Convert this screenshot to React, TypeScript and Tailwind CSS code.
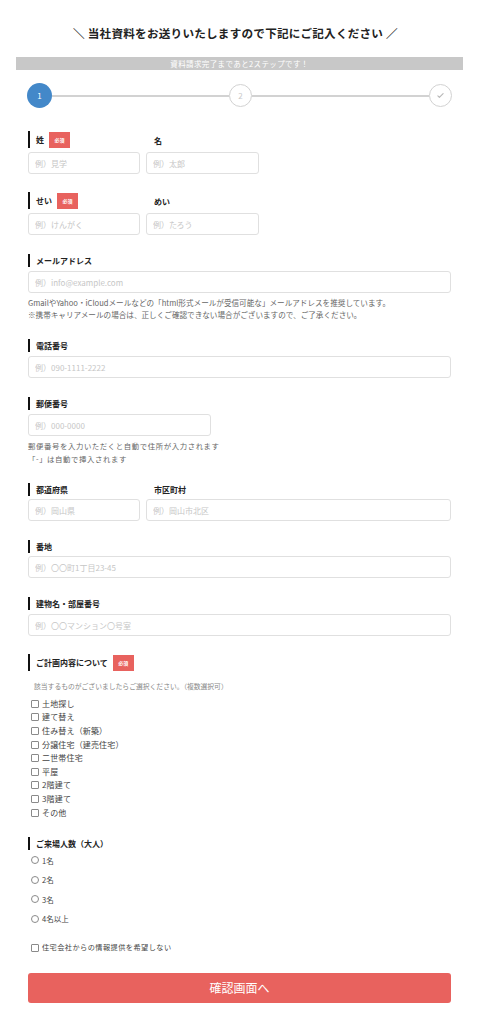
import React from 'react';

const Badge: React.FC = () => (
  <span className="ml-[5px] inline-flex h-[16px] w-[21px] items-center justify-center bg-[#e8625e] text-[5px] font-bold text-white">
    必須
  </span>
);

interface LabelProps {
  text: string;
  required?: boolean;
  bar?: boolean;
}

const Label: React.FC<LabelProps> = ({ text, required = false, bar = true }) => (
  <div
    className={`flex items-center border-l-2 pl-[6px] ${bar ? 'border-[#111]' : 'border-transparent'} ${
      required ? 'h-[17px]' : 'h-[13px]'
    }`}
  >
    <span className="text-[8px] font-bold leading-none text-[#222]">{text}</span>
    {required && <Badge />}
  </div>
);

const Field: React.FC<{ placeholder: string; className?: string }> = ({ placeholder, className = '' }) => (
  <input
    type="text"
    placeholder={placeholder}
    className={`block h-[22px] rounded-[3px] border border-[#e0e0e0] bg-white px-[6px] text-[8px] text-[#333] outline-none placeholder:text-[#c6c6c6] ${className}`}
  />
);

const Box: React.FC = () => (
  <span className="mr-[3px] inline-block h-[8px] w-[8px] rounded-[1px] border border-[#8a8a8a] bg-white" />
);

const Radio: React.FC = () => (
  <span className="mr-[3px] inline-block h-[8px] w-[8px] rounded-full border border-[#8a8a8a] bg-white" />
);

const plans = [
  '土地探し',
  '建て替え',
  '住み替え（新築）',
  '分譲住宅（建売住宅）',
  '二世帯住宅',
  '平屋',
  '2階建て',
  '3階建て',
  'その他',
];

const people = ['1名', '2名', '3名', '4名以上'];

export default function App() {
  return (
    <div className="min-h-[1024px] bg-white font-['Noto_Sans_CJK_JP','Noto_Sans',sans-serif] text-[#333]">
      <div className="ml-[16px] w-[447px] pt-[26px]">
        <h1 className="pr-[8px] text-center text-[11.6px] font-bold leading-[14px] tracking-[0.02em] text-[#222]">
          ＼ 当社資料をお送りいたしますので下記にご記入ください ／
        </h1>

        <div className="mt-[17px] flex h-[13px] items-center justify-center bg-[#c8c8c8] text-[7.5px] leading-none tracking-[0.05em] text-white">
          資料請求完了まであと2ステップです！
        </div>

        <div className="ml-[11px] mt-[13px] flex w-[425px] items-center">
          <div className="flex h-[25px] w-[25px] items-center justify-center rounded-full bg-[#4388c9] text-[8px] text-white">
            1
          </div>
          <div className="h-[2px] flex-1 bg-[#d2d2d2]" />
          <div className="flex h-[23px] w-[23px] items-center justify-center rounded-full border-[1.5px] border-[#d2d2d2] bg-white text-[8px] text-[#c8c8c8]">
            2
          </div>
          <div className="h-[2px] flex-1 bg-[#d2d2d2]" />
          <div className="flex h-[23px] w-[23px] items-center justify-center rounded-full border-[1.5px] border-[#d2d2d2] bg-white">
            <svg width="9" height="9" viewBox="0 0 24 24" fill="none" stroke="#b8b8b8" strokeWidth="3" strokeLinecap="round" strokeLinejoin="round">
              <path d="M5 13l4 4L19 7" />
            </svg>
          </div>
        </div>

        <form className="ml-[12px] mt-[23px] w-[423px]">
          {/* 姓 / 名 */}
          <div className="flex gap-[6px]">
            <div className="w-[112px]">
              <Label text="姓" required />
              <Field placeholder="例）見学" className="mt-[4px] w-[112px]" />
            </div>
            <div className="w-[113px]">
              <div className="flex h-[17px] items-end pb-[1px]">
                <Label text="名" bar={false} />
              </div>
              <Field placeholder="例）太郎" className="mt-[4px] w-[113px]" />
            </div>
          </div>

          {/* せい / めい */}
          <div className="mt-[18px] flex gap-[6px]">
            <div className="w-[112px]">
              <Label text="せい" required />
              <Field placeholder="例）けんがく" className="mt-[4px] w-[112px]" />
            </div>
            <div className="w-[113px]">
              <div className="flex h-[17px] items-end pb-[1px]">
                <Label text="めい" bar={false} />
              </div>
              <Field placeholder="例）たろう" className="mt-[4px] w-[113px]" />
            </div>
          </div>

          {/* メール */}
          <div className="mt-[19px]">
            <Label text="メールアドレス" />
            <Field placeholder="例）info@example.com" className="mt-[4px] w-full" />
            <p className="mt-[4px] text-[7.6px] leading-[12px] text-[#666]">
              GmailやYahoo・iCloudメールなどの「html形式メールが受信可能な」メールアドレスを推奨しています。
              <br />
              ※携帯キャリアメールの場合は、正しくご確認できない場合がございますので、ご了承ください。
            </p>
          </div>

          {/* 電話 */}
          <div className="mt-[18px]">
            <Label text="電話番号" />
            <Field placeholder="例）090-1111-2222" className="mt-[4px] w-full" />
          </div>

          {/* 郵便 */}
          <div className="mt-[19px]">
            <Label text="郵便番号" />
            <Field placeholder="例）000-0000" className="mt-[4px] w-[183px]" />
            <p className="mt-[4px] text-[7.4px] leading-[12.5px] tracking-[0.08em] text-[#666]">
              郵便番号を入力いただくと自動で住所が入力されます
              <br />
              「-」は自動で挿入されます
            </p>
          </div>

          {/* 都道府県 / 市区町村 */}
          <div className="mt-[18px] flex gap-[6px]">
            <div className="w-[112px] shrink-0">
              <Label text="都道府県" />
              <Field placeholder="例）岡山県" className="mt-[3px] w-[112px]" />
            </div>
            <div className="flex-1">
              <Label text="市区町村" bar={false} />
              <Field placeholder="例）岡山市北区" className="mt-[3px] w-full" />
            </div>
          </div>

          {/* 番地 */}
          <div className="mt-[19px]">
            <Label text="番地" />
            <Field placeholder="例）〇〇町1丁目23-45" className="mt-[3px] w-full" />
          </div>

          {/* 建物名 */}
          <div className="mt-[19px]">
            <Label text="建物名・部屋番号" />
            <Field placeholder="例）〇〇マンション〇号室" className="mt-[4px] w-full" />
          </div>

          {/* ご計画内容 */}
          <div className="mt-[18px]">
            <Label text="ご計画内容について" required />
            <p className="ml-[6px] mt-[10px] text-[6.8px] leading-[10px] text-[#888]">
              該当するものがございましたらご選択ください。（複数選択可）
            </p>
            <ul className="ml-[3px] mt-[6px]">
              {plans.map((p) => (
                <li key={p} className="flex h-[13.6px] items-center text-[8px] tracking-[0.02em] text-[#444]">
                  <Box />
                  {p}
                </li>
              ))}
            </ul>
          </div>

          {/* 来場人数 */}
          <div className="mt-[18px]">
            <Label text="ご来場人数（大人）" />
            <ul className="ml-[3px]">
              {people.map((p) => (
                <li key={p} className="flex h-[19.6px] items-center text-[7.5px] text-[#444]">
                  <Radio />
                  {p}
                </li>
              ))}
            </ul>
          </div>

          <div className="ml-[3px] mt-[13px] flex h-[12px] items-center text-[7.2px] tracking-[0.06em] text-[#444]">
            <Box />
            住宅会社からの情報提供を希望しない
          </div>

          <button
            type="button"
            className="mt-[19px] flex h-[30px] w-full items-center justify-center rounded-[3px] bg-[#e8625e] text-[12px] text-white"
          >
            確認画面へ
          </button>
        </form>
      </div>
    </div>
  );
}
